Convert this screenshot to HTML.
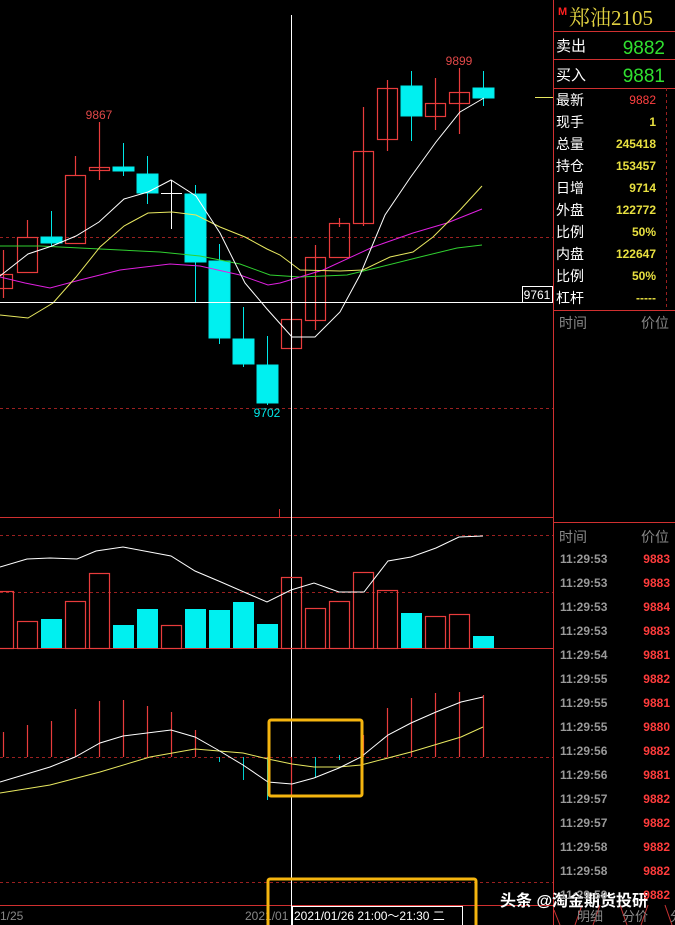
<!DOCTYPE html>
<html><head><meta charset="utf-8"><style>
html,body{margin:0;padding:0;background:#000;width:675px;height:925px;overflow:hidden}
svg{display:block}
text{font-family:"Liberation Sans","Noto Sans CJK SC",sans-serif}
.serif{font-family:"Liberation Serif","Noto Serif CJK SC",serif}
</style></head><body>
<svg width="675" height="925" viewBox="0 0 675 925" xmlns="http://www.w3.org/2000/svg">
<rect width="675" height="925" fill="#000"/>
<g stroke="#9a2020" stroke-dasharray="3,3" stroke-width="1">
<line x1="0" y1="237.5" x2="553" y2="237.5"/>
<line x1="0" y1="408.5" x2="553" y2="408.5"/>
<line x1="0" y1="535.5" x2="553" y2="535.5"/>
<line x1="0" y1="592.5" x2="553" y2="592.5"/>
<line x1="0" y1="757.5" x2="553" y2="757.5"/>
<line x1="0" y1="882.5" x2="553" y2="882.5"/>
</g>
<g stroke="#d03030" stroke-width="1">
<line x1="0" y1="517.5" x2="554" y2="517.5"/>
<line x1="0" y1="648.5" x2="554" y2="648.5"/>
<line x1="0" y1="905.5" x2="554" y2="905.5"/>
<line x1="553.5" y1="0" x2="553.5" y2="925"/>
<line x1="554" y1="31.5" x2="675" y2="31.5"/>
<line x1="554" y1="59.5" x2="675" y2="59.5"/>
<line x1="554" y1="88.5" x2="675" y2="88.5"/>
<line x1="554" y1="310.5" x2="675" y2="310.5"/>
<line x1="554" y1="522.5" x2="675" y2="522.5"/>
<line x1="279.5" y1="509" x2="279.5" y2="517"/>
</g>
<line x1="666.5" y1="88" x2="666.5" y2="310" stroke="#9a2020" stroke-dasharray="3,3"/>

<g stroke="#e83c3c" stroke-width="1.2" fill="none">
<line x1="3.5" y1="250" x2="3.5" y2="298"/><rect x="-6.5" y="274.5" width="19" height="14"/>
<line x1="27.5" y1="220" x2="27.5" y2="237"/><rect x="17.5" y="237.5" width="20" height="35"/>
<line x1="75.5" y1="156" x2="75.5" y2="175"/><rect x="65.5" y="175.5" width="20" height="68"/>
<line x1="99.5" y1="122" x2="99.5" y2="180"/><rect x="89.5" y="167.5" width="20" height="3"/>
<line x1="291.5" y1="300" x2="291.5" y2="349"/><rect x="281.5" y="319.5" width="20" height="29"/>
<line x1="315.5" y1="245" x2="315.5" y2="330"/><rect x="305.5" y="257.5" width="20" height="63"/>
<line x1="339.5" y1="218" x2="339.5" y2="227"/><rect x="329.5" y="223.5" width="20" height="34"/>
<line x1="363.5" y1="107" x2="363.5" y2="226"/><rect x="353.5" y="151.5" width="20" height="72"/>
<line x1="387.5" y1="80" x2="387.5" y2="151"/><rect x="377.5" y="88.5" width="20" height="51"/>
<line x1="435.5" y1="78" x2="435.5" y2="130"/><rect x="425.5" y="103.5" width="20" height="13"/>
<line x1="459.5" y1="68" x2="459.5" y2="134"/><rect x="449.5" y="92.5" width="20" height="11"/>
</g>
<g stroke="#00e8e8" fill="#00f0f0" stroke-width="1">
<line x1="51.5" y1="211" x2="51.5" y2="247"/><rect x="41" y="237" width="21" height="6"/>
<line x1="123.5" y1="143" x2="123.5" y2="176"/><rect x="113" y="167" width="21" height="4"/>
<line x1="147.5" y1="156" x2="147.5" y2="204"/><rect x="137" y="174" width="21" height="19"/>
<line x1="195.5" y1="185" x2="195.5" y2="302"/><rect x="185" y="194" width="21" height="68"/>
<line x1="219.5" y1="244" x2="219.5" y2="344"/><rect x="209" y="261" width="21" height="77"/>
<line x1="243.5" y1="307" x2="243.5" y2="367"/><rect x="233" y="339" width="21" height="25"/>
<line x1="267.5" y1="336" x2="267.5" y2="405"/><rect x="257" y="365" width="21" height="38"/>
<line x1="411.5" y1="71" x2="411.5" y2="141"/><rect x="401" y="86" width="21" height="30"/>
<line x1="483.5" y1="71" x2="483.5" y2="106"/><rect x="473" y="88" width="21" height="10"/>
</g>
<g stroke="#fff"><line x1="171.5" y1="180" x2="171.5" y2="229"/><line x1="161" y1="193.5" x2="182" y2="193.5"/></g>

<g fill="none" stroke-width="1">
<polyline stroke="#30d030" points="0,246 40,246 100,249 160,252 200,256 240,264 270,275 300,277 347,275 380,267 420,257 457,248 482,245"/>
<polyline stroke="#e020e0" points="0,277 25,283 50,288 80,280 120,270 170,264 200,266 240,275 268,285 280,283 323,270 373,247 413,233 447,223 482,209"/>
<polyline stroke="#e8e860" points="0,315 28,318 53,303 76,277 100,247 124,226 148,213 172,212 196,215 220,227 245,237 267,249 280,255 300,270 340,271 363,270 390,257 413,252 433,237 460,210 482,186"/>
<polyline stroke="#fff" points="0,276 28,254 52,246 76,236 99,222 124,199 148,192 171,180 196,196 220,233 245,283 267,309 292,337 315,337 340,312 360,275 385,215 410,178 436,142 460,112 484,98"/>
</g>
<line x1="535" y1="97.5" x2="553" y2="97.5" stroke="#e8e860"/>
<text x="99" y="119" fill="#e04848" font-size="12" text-anchor="middle">9867</text>
<text x="459" y="65" fill="#e04848" font-size="12" text-anchor="middle">9899</text>
<text x="267" y="417" fill="#00e8e8" font-size="12" text-anchor="middle">9702</text>
<line x1="0" y1="302.5" x2="522" y2="302.5" stroke="#fff"/>
<line x1="291.5" y1="15" x2="291.5" y2="925" stroke="#fff"/>
<rect x="522.5" y="286.5" width="30" height="16" fill="#000" stroke="#fff"/>
<text x="537" y="299" fill="#fff" font-size="12" text-anchor="middle">9761</text>

<g stroke="#e83c3c" stroke-width="1.2" fill="none">
<rect x="-6.5" y="591.5" width="20" height="57"/>
<rect x="17.5" y="621.5" width="20" height="27"/>
<rect x="65.5" y="601.5" width="20" height="47"/>
<rect x="89.5" y="573.5" width="20" height="75"/>
<rect x="161.5" y="625.5" width="20" height="23"/>
<rect x="281.5" y="577.5" width="20" height="71"/>
<rect x="305.5" y="608.5" width="20" height="40"/>
<rect x="329.5" y="601.5" width="20" height="47"/>
<rect x="353.5" y="572.5" width="20" height="76"/>
<rect x="377.5" y="590.5" width="20" height="58"/>
<rect x="425.5" y="616.5" width="20" height="32"/>
<rect x="449.5" y="614.5" width="20" height="34"/>
</g>
<g fill="#00f0f0">
<rect x="41" y="619" width="21" height="29"/>
<rect x="113" y="625" width="21" height="23"/>
<rect x="137" y="609" width="21" height="39"/>
<rect x="185" y="609" width="21" height="39"/>
<rect x="209" y="610" width="21" height="38"/>
<rect x="233" y="602" width="21" height="46"/>
<rect x="257" y="624" width="21" height="24"/>
<rect x="401" y="613" width="21" height="35"/>
<rect x="473" y="636" width="21" height="12"/>
</g>
<polyline fill="none" stroke="#fff" points="0,567 27,559 50,558 77,559 96,551 123,547 171,556 195,571 221,582 267,602 291,590 314,583 339,592 364,592 388,561 411,557 436,548 459,537 483,536"/>

<g stroke="#e83c3c" stroke-width="1.2">
<line x1="3.5" y1="732" x2="3.5" y2="757"/><line x1="27.5" y1="725" x2="27.5" y2="757"/>
<line x1="51.5" y1="721" x2="51.5" y2="757"/><line x1="75.5" y1="709" x2="75.5" y2="757"/>
<line x1="99.5" y1="701" x2="99.5" y2="757"/><line x1="123.5" y1="700" x2="123.5" y2="757"/>
<line x1="147.5" y1="706" x2="147.5" y2="757"/><line x1="171.5" y1="712" x2="171.5" y2="757"/>
<line x1="195.5" y1="730" x2="195.5" y2="757"/><line x1="291.5" y1="757" x2="291.5" y2="797"/>
<line x1="363.5" y1="735" x2="363.5" y2="757"/><line x1="387.5" y1="708" x2="387.5" y2="757"/>
<line x1="411.5" y1="698" x2="411.5" y2="757"/><line x1="435.5" y1="693" x2="435.5" y2="757"/>
<line x1="459.5" y1="692" x2="459.5" y2="757"/><line x1="483.5" y1="695" x2="483.5" y2="757"/>
</g>
<g stroke="#00d0d0">
<line x1="219.5" y1="757" x2="219.5" y2="762"/><line x1="243.5" y1="757" x2="243.5" y2="780"/>
<line x1="267.5" y1="757" x2="267.5" y2="800"/><line x1="315.5" y1="757" x2="315.5" y2="778"/>
<line x1="339.5" y1="755" x2="339.5" y2="760"/>
</g>
<polyline fill="none" stroke="#e8e860" points="0,793 50,785 100,772 150,757 195,749 243,753 268,759 292,764 314,767 339,767 361,765 411,752 461,737 483,727"/>
<polyline fill="none" stroke="#fff" points="0,782 50,767 75,757 100,743 123,736 171,730 195,737 218,750 243,765 268,782 292,784 314,778 339,768 361,757 388,735 411,723 436,712 461,702 483,697"/>
<rect x="269" y="720" width="93" height="76" rx="2" fill="none" stroke="#f5b50f" stroke-width="3"/>

<text x="0" y="920" fill="#888" font-size="12">1/25</text>
<text x="245" y="920" fill="#888" font-size="12">2021/01</text>
<rect x="292.5" y="906.5" width="170" height="20" fill="#000" stroke="#fff"/>
<text x="294" y="920" fill="#fff" font-size="12">2021/01/26 21:00～21:30 二</text>
<rect x="268" y="879" width="208" height="50" rx="2" fill="none" stroke="#f5b50f" stroke-width="3"/>
<path d="M554 910 L560 925 M582 905 L575 925 M600 905 L593 925 M620 905 L627 925 M648 905 L641 925 M665 905 L672 925" stroke="#c83232" fill="none"/>
<text x="577" y="921" fill="#888" font-size="13">明细</text>
<text x="622" y="921" fill="#888" font-size="13">分价</text>
<text x="670" y="921" fill="#888" font-size="13">分</text>
<text x="500" y="906" fill="#fff" font-size="16" font-weight="bold">头条 @淘金期货投研</text>

<text x="558" y="15" fill="#ff2020" font-size="11" font-weight="bold">M</text>
<text x="569" y="25" fill="#e0d040" font-size="21" class="serif">郑油2105</text>
<text x="556" y="51" fill="#fff" font-size="15">卖出</text>
<text x="665" y="54" fill="#30e030" font-size="19" text-anchor="end">9882</text>
<text x="556" y="80" fill="#fff" font-size="15">买入</text>
<text x="665" y="82" fill="#30e030" font-size="19" text-anchor="end">9881</text>
<g fill="#fff" font-size="14">
<text x="556" y="105">最新</text><text x="556" y="127">现手</text><text x="556" y="149">总量</text>
<text x="556" y="171">持仓</text><text x="556" y="193">日增</text><text x="556" y="215">外盘</text>
<text x="556" y="237">比例</text><text x="556" y="259">内盘</text><text x="556" y="281">比例</text>
<text x="556" y="303">杠杆</text>
</g>
<g fill="#e8e040" font-size="12" font-weight="bold" text-anchor="end">
<text x="656" y="104" fill="#ff4040" font-weight="normal">9882</text><text x="656" y="126">1</text>
<text x="656" y="148">245418</text><text x="656" y="170">153457</text><text x="656" y="192">9714</text>
<text x="656" y="214">122772</text><text x="656" y="236">50%</text><text x="656" y="258">122647</text>
<text x="656" y="280">50%</text><text x="656" y="302">-----</text>
</g>
<text x="559" y="328" fill="#888" font-size="14">时间</text>
<text x="669" y="328" fill="#888" font-size="14" text-anchor="end">价位</text>
<text x="559" y="542" fill="#888" font-size="14">时间</text>
<text x="669" y="542" fill="#888" font-size="14" text-anchor="end">价位</text>
<g font-size="12" font-weight="bold">
<g fill="#999">
<text x="560" y="563">11:29:53</text><text x="560" y="587">11:29:53</text><text x="560" y="611">11:29:53</text>
<text x="560" y="635">11:29:53</text><text x="560" y="659">11:29:54</text><text x="560" y="683">11:29:55</text>
<text x="560" y="707">11:29:55</text><text x="560" y="731">11:29:55</text><text x="560" y="755">11:29:56</text>
<text x="560" y="779">11:29:56</text><text x="560" y="803">11:29:57</text><text x="560" y="827">11:29:57</text>
<text x="560" y="851">11:29:58</text><text x="560" y="875">11:29:58</text><text x="560" y="899">11:29:59</text>
</g>
<g fill="#ff3c3c" text-anchor="end">
<text x="670" y="563">9883</text><text x="670" y="587">9883</text><text x="670" y="611">9884</text>
<text x="670" y="635">9883</text><text x="670" y="659">9881</text><text x="670" y="683">9882</text>
<text x="670" y="707">9881</text><text x="670" y="731">9880</text><text x="670" y="755">9882</text>
<text x="670" y="779">9881</text><text x="670" y="803">9882</text><text x="670" y="827">9882</text>
<text x="670" y="851">9882</text><text x="670" y="875">9882</text><text x="670" y="899">9882</text>
</g>
</g>
</svg>
</body></html>
